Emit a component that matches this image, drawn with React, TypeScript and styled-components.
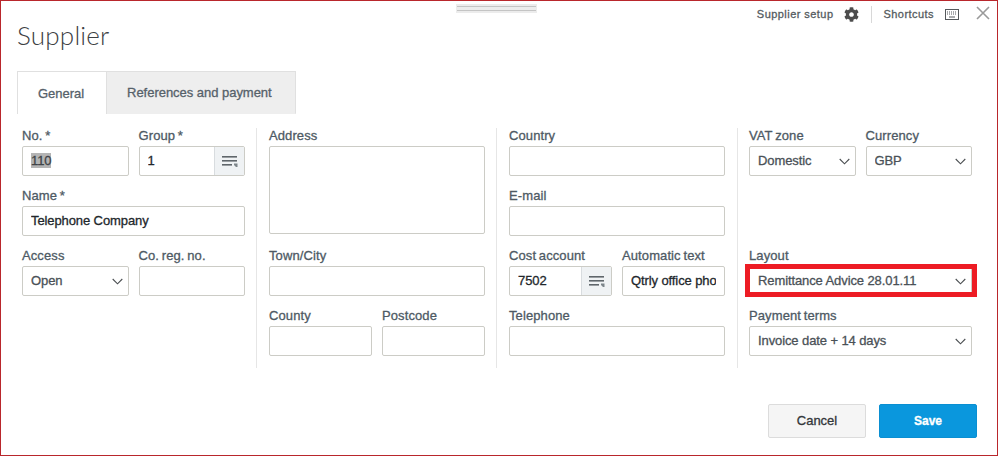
import React from "react";
import styled, { createGlobalStyle } from "styled-components";
import { FaCog } from "react-icons/fa";

const GlobalStyle = createGlobalStyle`
  html, body {
    margin: 0;
    padding: 0;
    background: #fff;
  }
  * {
    box-sizing: border-box;
  }
`;

const Frame = styled.div`
  position: relative;
  width: 998px;
  height: 456px;
  border: 1px solid #b9272c;
  background: #fff;
  padding: 0 20px 0 16px;
  font-family: "Liberation Sans", Arial, sans-serif;
  font-size: 13px;
  -webkit-text-stroke: 0.3px;
  overflow: hidden;
`;

const DragHandle = styled.div`
  position: absolute;
  left: 455px;
  top: 3px;
  width: 81px;
  height: 9px;
  background: #ececec;
  &::before,
  &::after {
    content: "";
    position: absolute;
    left: 1px;
    right: 1px;
    height: 1px;
    background: #c4c4c4;
  }
  &::before {
    top: 2px;
  }
  &::after {
    top: 6px;
  }
`;

const Header = styled.div`
  display: flex;
  justify-content: space-between;
  align-items: flex-start;
  height: 70px;
  margin-right: -13px;
`;

const Title = styled.h1`
  margin: 0;
  padding-top: 19px;
  font-family: Lato, "Open Sans", sans-serif;
  font-weight: 300;
  font-size: 26px;
  line-height: 30px;
  letter-spacing: 0.2px;
  color: #3c4043;
  -webkit-text-stroke: 0;
`;

const Tools = styled.div`
  display: flex;
  align-items: center;
  height: 26px;
`;

const ToolLabel = styled.span`
  font-size: 11px;
  letter-spacing: 0.45px;
  color: #555b60;
`;

const ToolDivider = styled.span`
  width: 1px;
  height: 17px;
  margin: 0 11px 0 12px;
  background: #d8d8d8;
`;

const GearIcon = styled(FaCog)`
  margin-left: 11px;
  width: 15px;
  height: 15px;
  color: #4d4d4d;
`;

const KeyIcon = styled.svg`
  margin-left: 11px;
  width: 14px;
  height: 11px;
`;

const CloseIcon = styled.svg`
  margin: -3px 0 0 17px;
  width: 14px;
  height: 14px;
`;

const TabRow = styled.div`
  display: flex;
  height: 43px;
`;

const Tab = styled.div<{ $active?: boolean }>`
  display: flex;
  align-items: center;
  padding: 0 ${(p) => (p.$active ? "22px" : "23px")} 0 ${(p) => (p.$active ? "20px" : "20px")};
  letter-spacing: -0.03px;
  color: #56616a;
  background: ${(p) => (p.$active ? "#fff" : "#eeeeee")};
  border: 1px solid #e0e0e0;
  border-bottom: ${(p) => (p.$active ? "none" : "1px solid #eeeeee")};
  border-left-width: ${(p) => (p.$active ? "1px" : "0")};
`;

const Form = styled.div`
  display: grid;
  grid-template-columns: 235px 240px 241px 1fr;
  padding: 14px 5px 0 5px;
`;

const Column = styled.div`
  display: flex;
  flex-direction: column;
  padding: 0 12px 0 12px;
  border-right: 1px solid #e6e6e6;
  &:nth-child(1) {
    padding-left: 0;
    padding-right: 11px;
  }
  &:nth-child(2) {
    padding-right: 11px;
  }
  &:nth-child(4) {
    padding-left: 11px;
    padding-right: 0;
    border-right: none;
  }
`;

const Row = styled.div`
  display: grid;
  grid-template-columns: 1fr 1fr;
  column-gap: 10px;
`;

const Field = styled.div`
  min-width: 0;
  height: 60px;
`;

const TallField = styled.div`
  height: 120px;
`;

const Spacer = styled.div`
  height: 60px;
`;

const Label = styled.div`
  height: 18px;
  padding-bottom: 3px;
  line-height: 15px;
  letter-spacing: 0.1px;
  word-spacing: -1px;
  color: #4e5a64;
  white-space: nowrap;
`;

const Control = styled.div`
  display: flex;
  align-items: center;
  height: 30px;
  padding-left: 8px;
  border: 1px solid #ccccc6;
  border-radius: 2px;
  background: #fff;
  overflow: hidden;
  letter-spacing: -0.1px;
  color: #22272b;
  white-space: nowrap;
`;

const TextBox = styled.div`
  height: 88px;
  border: 1px solid #ccccc6;
  border-radius: 2px;
`;

const Value = styled.span<{ $muted?: boolean }>`
  flex: 1;
  min-width: 0;
  overflow: hidden;
  padding-bottom: 2px;
  margin-right: ${(p) => (p.$muted ? "0" : "8px")};
  color: ${(p) => (p.$muted ? "#4a5157" : "inherit")};
`;

const Selected = styled.span`
  background: #b4b4b4;
  color: #3f4347;
`;

const LookupButton = styled.div`
  display: flex;
  align-items: center;
  justify-content: center;
  flex: none;
  width: 30px;
  height: 28px;
  margin-left: -8px;
  background: #eff2f4;
  border-left: 1px solid #d8dcdf;
`;

const Chevron = styled.svg`
  flex: none;
  width: 11px;
  height: 7px;
  margin: 1px 5px 0 6px;
`;

const Highlight = styled.div`
  position: relative;
  &::after {
    content: "";
    position: absolute;
    left: -4px;
    right: -5px;
    top: -2px;
    bottom: -1px;
    border: 5px solid #ed1c24;
    pointer-events: none;
  }
`;

const Footer = styled.div`
  display: flex;
  justify-content: flex-end;
  gap: 13px;
  margin-top: 36px;
`;

const Button = styled.button<{ $primary?: boolean }>`
  width: 98px;
  height: 34px;
  padding: 0 0 ${(p) => (p.$primary ? "0" : "2px")};
  border-radius: 2px;
  font-family: inherit;
  font-size: ${(p) => (p.$primary ? "12px" : "13px")};
  font-weight: ${(p) => (p.$primary ? 700 : 400)};
  color: ${(p) => (p.$primary ? "#fff" : "#33373a")};
  background: ${(p) => (p.$primary ? "#0a97dd" : "#f5f5f5")};
  border: 1px solid ${(p) => (p.$primary ? "#0a8fd2" : "#dcdcdc")};
`;

const ListIcon = () => (
  <svg width="16" height="13" viewBox="0 0 16 13">
    <rect x="0" y="1" width="15" height="1.6" fill="#5f666b" />
    <rect x="0" y="5" width="15" height="1.6" fill="#5f666b" />
    <rect x="0" y="9" width="10" height="1.6" fill="#5f666b" />
    <path d="M12 8.5h3.5V12H14l-2-2z" fill="#7d858a" />
  </svg>
);

const Arrow = () => (
  <Chevron viewBox="0 0 11 7">
    <path d="M0.7 1l4.8 4.8L10.3 1" fill="none" stroke="#4b4f52" strokeWidth="1.1" />
  </Chevron>
);

const Select = ({ value }: { value: string }) => (
  <Control>
    <Value $muted>{value}</Value>
    <Arrow />
  </Control>
);

const Lookup = ({ value }: { value: string }) => (
  <Control>
    <Value>{value}</Value>
    <LookupButton>
      <ListIcon />
    </LookupButton>
  </Control>
);

const App: React.FC = () => {
  return (
    <>
      <GlobalStyle />
      <Frame>
        <DragHandle />
        <Header>
          <Title>Supplier</Title>
          <Tools>
            <ToolLabel>Supplier setup</ToolLabel>
            <GearIcon />
            <ToolDivider />
            <ToolLabel>Shortcuts</ToolLabel>
            <KeyIcon viewBox="0 0 14 11">
              <rect x="0.5" y="0.5" width="13" height="10" fill="none" stroke="#55595c" />
              <path d="M2 3h10M2 5h10" stroke="#55595c" strokeDasharray="1 1" />
              <path d="M4 8h6" stroke="#55595c" />
            </KeyIcon>
            <CloseIcon viewBox="0 0 14 14">
              <path d="M1 1l12 12M13 1L1 13" stroke="#9a9a9a" strokeWidth="1.6" fill="none" />
            </CloseIcon>
          </Tools>
        </Header>
        <TabRow>
          <Tab $active>General</Tab>
          <Tab>References and payment</Tab>
        </TabRow>
        <Form>
          <Column>
            <Row>
              <Field>
                <Label>No. *</Label>
                <Control>
                  <Value>
                    <Selected>110</Selected>
                  </Value>
                </Control>
              </Field>
              <Field>
                <Label>Group *</Label>
                <Lookup value="1" />
              </Field>
            </Row>
            <Field>
              <Label>Name *</Label>
              <Control>
                <Value>Telephone Company</Value>
              </Control>
            </Field>
            <Row>
              <Field>
                <Label>Access</Label>
                <Select value="Open" />
              </Field>
              <Field>
                <Label>Co. reg. no.</Label>
                <Control />
              </Field>
            </Row>
          </Column>
          <Column>
            <TallField>
              <Label>Address</Label>
              <TextBox />
            </TallField>
            <Field>
              <Label>Town/City</Label>
              <Control />
            </Field>
            <Row>
              <Field>
                <Label>County</Label>
                <Control />
              </Field>
              <Field>
                <Label>Postcode</Label>
                <Control />
              </Field>
            </Row>
          </Column>
          <Column>
            <Field>
              <Label>Country</Label>
              <Control />
            </Field>
            <Field>
              <Label>E-mail</Label>
              <Control />
            </Field>
            <Row>
              <Field>
                <Label>Cost account</Label>
                <Lookup value="7502" />
              </Field>
              <Field>
                <Label>Automatic text</Label>
                <Control>
                  <Value>Qtrly office phone</Value>
                </Control>
              </Field>
            </Row>
            <Field>
              <Label>Telephone</Label>
              <Control />
            </Field>
          </Column>
          <Column>
            <Row>
              <Field>
                <Label>VAT zone</Label>
                <Select value="Domestic" />
              </Field>
              <Field>
                <Label>Currency</Label>
                <Select value="GBP" />
              </Field>
            </Row>
            <Spacer />
            <Field>
              <Label>Layout</Label>
              <Highlight>
                <Select value="Remittance Advice 28.01.11" />
              </Highlight>
            </Field>
            <Field>
              <Label>Payment terms</Label>
              <Select value="Invoice date + 14 days" />
            </Field>
          </Column>
        </Form>
        <Footer>
          <Button>Cancel</Button>
          <Button $primary>Save</Button>
        </Footer>
      </Frame>
    </>
  );
};

export default App;
